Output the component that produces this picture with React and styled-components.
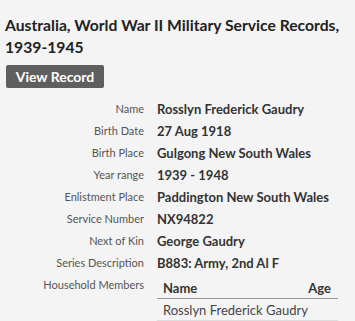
import React from "react";
import styled, { createGlobalStyle } from "styled-components";

const GlobalStyle = createGlobalStyle`
  html, body {
    margin: 0;
    padding: 0;
    background: #f4f4f4;
  }
  body {
    font-family: Lato, "Liberation Sans", sans-serif;
    color: #333;
  }
`;

const fields = [
  ["Name", "Rosslyn Frederick Gaudry"],
  ["Birth Date", "27 Aug 1918"],
  ["Birth Place", "Gulgong New South Wales"],
  ["Year range", "1939 - 1948"],
  ["Enlistment Place", "Paddington New South Wales"],
  ["Service Number", "NX94822"],
  ["Next of Kin", "George Gaudry"],
  ["Series Description", "B883: Army, 2nd Al F"],
];

const household = [{ name: "Rosslyn Frederick Gaudry", age: "" }];

export default function App() {
  return (
    <>
      <GlobalStyle />
      <Page>
        <Title>Australia, World War II Military Service Records, 1939-1945</Title>
        <ViewButton>View Record</ViewButton>
        <Facts>
          {fields.map(([label, value]) => (
            <Row key={label}>
              <Label>{label}</Label>
              <Value>{value}</Value>
            </Row>
          ))}
          <Row>
            <Label>Household Members</Label>
            <Members>
              <thead>
                <tr>
                  <Th>Name</Th>
                  <Th $right>Age</Th>
                </tr>
              </thead>
              <tbody>
                {household.map((m) => (
                  <tr key={m.name}>
                    <Td>{m.name}</Td>
                    <Td $right>{m.age}</Td>
                  </tr>
                ))}
              </tbody>
            </Members>
          </Row>
        </Facts>
      </Page>
    </>
  );
}

const Page = styled.div`
  padding: 14px 6px 0 5px;
`;

const Title = styled.h1`
  margin: 0;
  font-size: 15.7px;
  line-height: 22px;
  font-weight: 700;
  color: #222;
`;

const ViewButton = styled.button`
  display: block;
  margin: 7px 0 0 1px;
  width: 98px;
  height: 23px;
  padding: 0;
  border: none;
  border-radius: 2px;
  background: #5f5f5f;
  color: #fff;
  font-family: inherit;
  font-size: 14px;
  font-weight: 700;
  cursor: pointer;
`;

const Facts = styled.div`
  margin-top: 10px;
  display: flex;
  flex-direction: column;
`;

const Row = styled.div`
  display: grid;
  grid-template-columns: 139px 1fr;
  column-gap: 13px;
  align-items: start;
  min-height: 22px;
`;

const Label = styled.div`
  text-align: right;
  font-size: 11px;
  line-height: 22px;
  color: #555;
`;

const Value = styled.div`
  font-size: 13px;
  line-height: 22px;
  font-weight: 700;
  color: #333;
`;

const Members = styled.table`
  width: 181px;
  border-collapse: collapse;
  font-size: 13px;
  margin-top: 4px;
`;

const Th = styled.th`
  text-align: ${(p) => (p.$right ? "right" : "left")};
  font-weight: 700;
  padding: 0 ${(p) => (p.$right ? "7px" : "0")} 0 ${(p) => (p.$right ? "0" : "6px")};
  height: 20px;
  border-bottom: 1px solid #999;
  color: #333;
`;

const Td = styled.td`
  text-align: ${(p) => (p.$right ? "right" : "left")};
  padding: 0 0 0 6px;
  height: 21px;
  border-bottom: 1px solid #ddd;
  color: #444;
`;
